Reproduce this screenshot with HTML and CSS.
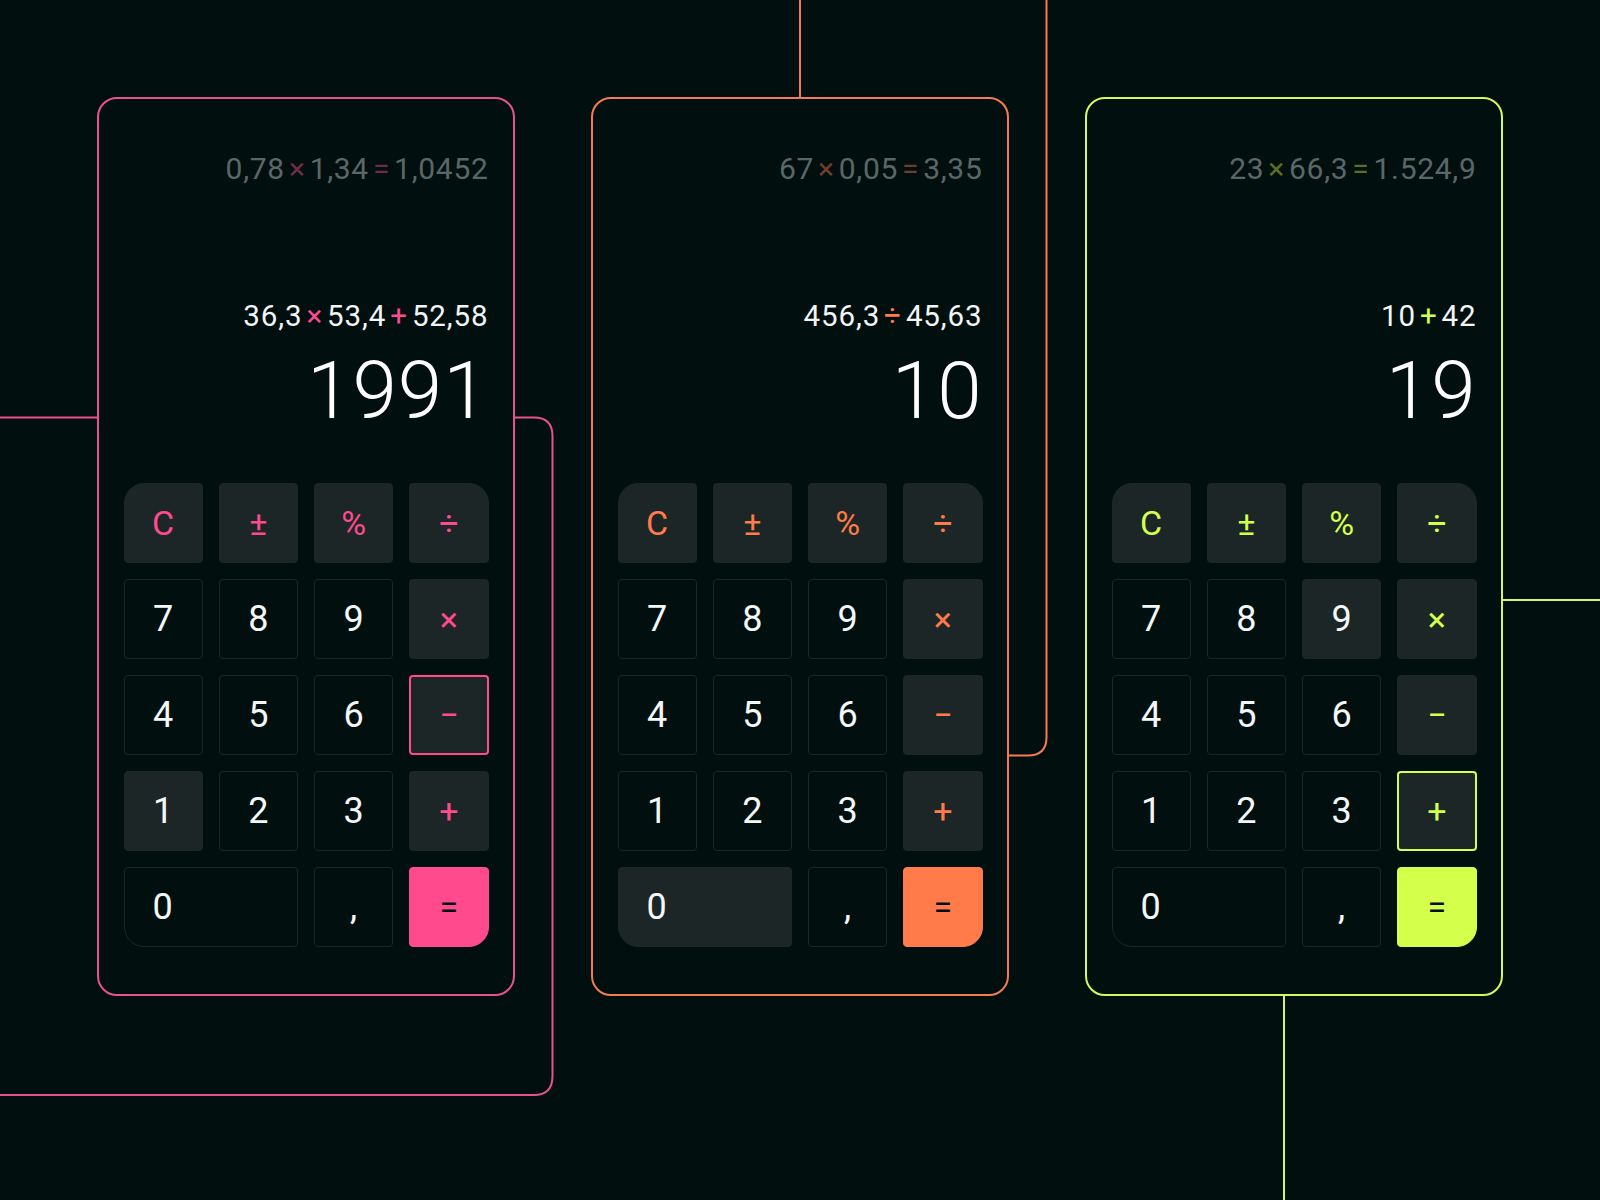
FILE: index.html
```html
<!DOCTYPE html>
<html lang="en">
<head>
<meta charset="utf-8">
<title>Calculators</title>
<link rel="stylesheet" href="styles.css">
</head>
<body>
<div class="stage">
  <svg class="wires" width="1600" height="1200" viewBox="0 0 1600 1200" aria-hidden="true">
    <path d="M0 417.5 H534 Q552.5 417.5 552.5 436 V1076 Q552.5 1095 534 1095 H0" fill="none" stroke="#e8528c" stroke-width="2"/>
    <path d="M800 0 V120" fill="none" stroke="#f47c4e" stroke-width="2"/>
    <path d="M1046.5 0 V737 Q1046.5 755.5 1028 755.5 H990" fill="none" stroke="#f47c4e" stroke-width="2"/>
    <path d="M1480 600 H1600" fill="none" stroke="#d6f85a" stroke-width="2"/>
    <path d="M1284 980 V1200" fill="none" stroke="#d6f85a" stroke-width="2"/>
  </svg>

  <div class="row">
    <section class="calc pink">
      <div class="history">0,78<span class="op">×</span>1,34<span class="op">=</span>1,0452</div>
      <div class="expr">36,3<span class="op">×</span>53,4<span class="op">+</span>52,58</div>
      <div class="result">1991</div>
      <div class="keys">
        <div class="key fn tl">C</div><div class="key fn">±</div><div class="key fn">%</div><div class="key fn tr">÷</div>
        <div class="key">7</div><div class="key">8</div><div class="key">9</div><div class="key fn">×</div>
        <div class="key">4</div><div class="key">5</div><div class="key">6</div><div class="key fn active">−</div>
        <div class="key pressed">1</div><div class="key">2</div><div class="key">3</div><div class="key fn">+</div>
        <div class="key zero bl">0</div><div class="key comma">,</div><div class="key eq br">=</div>
      </div>
    </section>

    <section class="calc orange">
      <div class="history">67<span class="op">×</span>0,05<span class="op">=</span>3,35</div>
      <div class="expr">456,3<span class="op">÷</span>45,63</div>
      <div class="result">10</div>
      <div class="keys">
        <div class="key fn tl">C</div><div class="key fn">±</div><div class="key fn">%</div><div class="key fn tr">÷</div>
        <div class="key">7</div><div class="key">8</div><div class="key">9</div><div class="key fn">×</div>
        <div class="key">4</div><div class="key">5</div><div class="key">6</div><div class="key fn">−</div>
        <div class="key">1</div><div class="key">2</div><div class="key">3</div><div class="key fn">+</div>
        <div class="key zero bl pressed">0</div><div class="key comma">,</div><div class="key eq br">=</div>
      </div>
    </section>

    <section class="calc lime">
      <div class="history">23<span class="op">×</span>66,3<span class="op">=</span>1.524,9</div>
      <div class="expr">10<span class="op">+</span>42</div>
      <div class="result">19</div>
      <div class="keys">
        <div class="key fn tl">C</div><div class="key fn">±</div><div class="key fn">%</div><div class="key fn tr">÷</div>
        <div class="key">7</div><div class="key">8</div><div class="key pressed">9</div><div class="key fn">×</div>
        <div class="key">4</div><div class="key">5</div><div class="key">6</div><div class="key fn">−</div>
        <div class="key">1</div><div class="key">2</div><div class="key">3</div><div class="key fn active">+</div>
        <div class="key zero bl">0</div><div class="key comma">,</div><div class="key eq br">=</div>
      </div>
    </section>
  </div>
</div>
</body>
</html>
```

FILE: styles.css
```css
* { box-sizing: border-box; }

html, body {
  margin: 0;
  padding: 0;
  background: #020f0f;
}

body {
  font-family: Roboto, "Liberation Sans", sans-serif;
  color: #f2f5f5;
}

.stage {
  position: relative;
  width: 1600px;
  height: 1200px;
  overflow: hidden;
}

.wires {
  position: absolute;
  left: 0;
  top: 0;
  z-index: 0;
}

.row {
  position: relative;
  z-index: 1;
  display: flex;
  justify-content: center;
  gap: 76px;
  padding-top: 97px;
}

.calc {
  --accent: #ff4a8d;
  --line: #e8528c;
  --dim: #6e2b4a;
  width: 418px;
  height: 899px;
  border: 2px solid var(--line);
  border-radius: 20px;
  background: #020f0f;
  padding: 51.5px 24.5px 0;
  display: flex;
  flex-direction: column;
}

.calc.orange {
  --accent: #ff7c4a;
  --line: #f47c4e;
  --dim: #703e2a;
}

.calc.lime {
  --accent: #d4ff4a;
  --line: #d6f85a;
  --dim: #5c6e24;
}

.history,
.expr,
.result {
  text-align: right;
  white-space: nowrap;
}

.history {
  font-size: 30px;
  line-height: 36px;
  font-weight: 400;
  letter-spacing: 0.7px;
  color: #5b6767;
}

.history .op {
  color: var(--dim);
  margin: 0 4px;
}

.expr {
  margin-top: 111px;
  font-size: 29.5px;
  line-height: 36px;
  font-weight: 400;
  letter-spacing: 0.9px;
  color: #f2f5f5;
}

.expr .op {
  color: var(--accent);
  margin: 0 4px;
}

.result {
  margin-top: 17px;
  font-size: 80px;
  line-height: 80px;
  font-weight: 300;
  color: #ffffff;
  letter-spacing: 1px;
}

.keys {
  margin-top: 52px;
  display: grid;
  grid-template-columns: repeat(4, 1fr);
  grid-auto-rows: 80px;
  gap: 16px;
}

.key {
  display: flex;
  align-items: center;
  justify-content: center;
  border: 1.5px solid #1c2727;
  border-radius: 4px;
  font-size: 36px;
  font-weight: 400;
  color: #f4f7f7;
}

.key.fn {
  background: #1c2626;
  border-color: #1c2626;
  color: var(--accent);
  font-size: 34px;
}

.key.pressed {
  background: #1c2626;
  border-color: #1c2626;
}

.key.active {
  border: 2px solid var(--accent);
}

.key.zero {
  grid-column: span 2;
  justify-content: flex-start;
  padding-left: 28px;
}

.key.eq {
  background: var(--accent);
  border-color: var(--accent);
  color: #020f0f;
  font-size: 34px;
}

.key.tl { border-top-left-radius: 20px; }
.key.tr { border-top-right-radius: 20px; }
.key.bl { border-bottom-left-radius: 20px; }
.key.br { border-bottom-right-radius: 20px; }
```
